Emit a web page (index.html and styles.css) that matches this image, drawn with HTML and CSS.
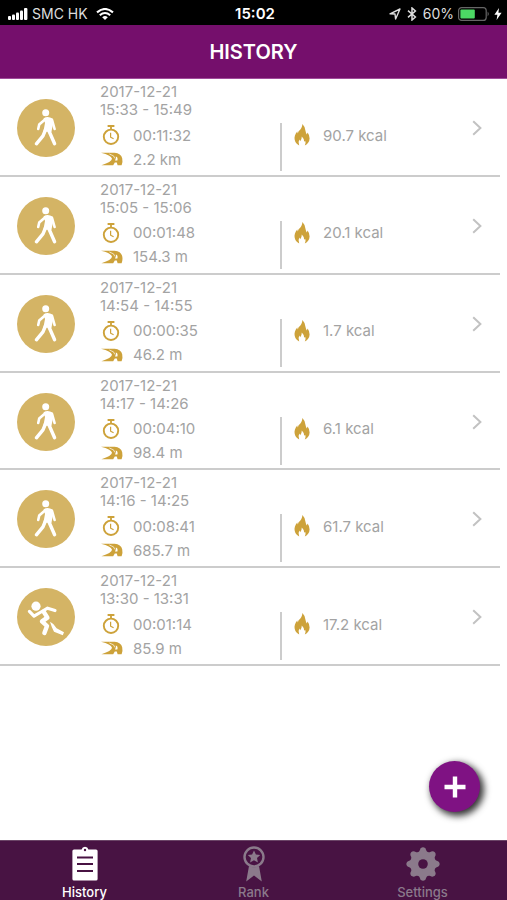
FILE: index.html
```html
<!DOCTYPE html>
<html lang="en">
<head>
<meta charset="utf-8">
<meta name="viewport" content="width=device-width, initial-scale=1">
<title>History</title>
<link rel="stylesheet" href="styles.css">
</head>
<body>
<svg class="sprite" aria-hidden="true">
  <symbol id="walk" viewBox="0 0 58 58">
    <circle cx="28.7" cy="13.7" r="3.5" fill="#fff"/>
    <path d="M26.6 19.2Q31 16.4 35.4 19.6L36 25 34.4 33 26.4 32.4 28 24Z" fill="#fff"/>
    <path d="M28 20.6L22.2 25.6 21.2 30M35 20.8L37.6 30" fill="none" stroke="#fff" stroke-width="2.6" stroke-linecap="round" stroke-linejoin="round"/>
    <path d="M28.4 31L26 36.8 19.4 44.8M32 32L37.6 44.8" fill="none" stroke="#fff" stroke-width="3.4" stroke-linecap="round" stroke-linejoin="round"/>
  </symbol>
  <symbol id="run" viewBox="0 0 58 58">
    <circle cx="19" cy="18.2" r="4.6" fill="#fff"/>
    <path d="M12.4 23.4L17 28.2 24 24 30.6 20.2 38 22.6" fill="none" stroke="#fff" stroke-width="3.2" stroke-linecap="round" stroke-linejoin="round"/>
    <path d="M26.6 23.6L30.4 29.6 25 33.4 30 38 27.4 45" fill="none" stroke="#fff" stroke-width="4.4" stroke-linecap="round" stroke-linejoin="round"/>
    <path d="M33 33.8Q37 35.6 39.6 40.2L47 44.2 45.8 47.2 37 43.8Q34.6 39.4 33 33.8Z" fill="#fff"/>
  </symbol>
  <symbol id="watch" viewBox="0 0 18 20">
    <circle cx="9" cy="11.8" r="7.2" fill="none" stroke="#cda23a" stroke-width="1.9"/>
    <path d="M5.6 1H12.4M9 1.6V4" fill="none" stroke="#cda23a" stroke-width="1.8"/>
    <path d="M8.6 7.8V12.2L11.6 13.8" fill="none" stroke="#cda23a" stroke-width="1.2"/>
  </symbol>
  <symbol id="road" viewBox="0 0 22 14">
    <path d="M0 .8H13.6Q20 1.4 21.2 6.2 22 9.8 20.6 13.2H16.6L15.8 10.4H13.8L12.2 13.2H.4Q10.8 10 11 6.8 10 3.2 0 .8Z" fill="#cda23a"/>
    <path d="M8.4 2Q14 3.6 13.8 6.4" fill="none" stroke="#fff" stroke-width=".7"/>
    <path d="M14.8 4.6Q17.2 5.4 16.4 8.4H14Q15.4 6.4 14.8 4.6Z" fill="#fff"/>
  </symbol>
  <symbol id="flame" viewBox="0 0 16 22">
    <path d="M8.4 0Q8.2 4.6 4.6 7.2L3.8 9.4 3.2 7.4Q0 11.4 .6 15.2 1.2 19.4 5.2 21.4 3.6 18.6 5.4 15.6L6.2 17.2Q7.8 15.4 7.8 12.4 10.6 15 10.2 17.8L11.2 16.8Q12.2 19.2 10.8 21.4 15.4 19 15.6 14.4 15.6 11 13.6 8.4L12.8 10.6Q11.8 8.6 11.4 6.4 11 2.6 8.4 0Z" fill="#cda23a"/>
  </symbol>
  <symbol id="chevron" viewBox="0 0 10 16">
    <path d="M1.2 1.2L8.4 8 1.2 14.8" fill="none" stroke="#c2c2c2" stroke-width="2"/>
  </symbol>
</svg>

<div class="screen">
  <div class="status">
    <div class="status-side">
      <svg width="20" height="12" viewBox="0 0 20 12" fill="#fff"><rect y="8" width="3" height="4" rx="1"/><rect x="4" y="6.5" width="3" height="5.5" rx="1"/><rect x="8" y="4.5" width="3" height="7.5" rx="1"/><rect x="12" y="2.5" width="3" height="9.5" rx="1"/><rect x="16" width="3.4" height="12" rx="1"/></svg>
      <span class="carrier">SMC HK</span>
      <svg width="18" height="12" viewBox="0 0 18 12" fill="none" stroke="#fff" stroke-width="2.1"><path d="M1 4.4Q9-2.4 17 4.4M3.8 7.2Q9 2.8 14.2 7.2"/><path d="M6.2 9.2Q9 6.8 11.8 9.2L9 12Z" fill="#fff" stroke="none"/></svg>
    </div>
    <span class="clock">15:02</span>
    <div class="status-side status-right">
      <svg width="12" height="12" viewBox="0 0 12 12" fill="none" stroke="#ddd" stroke-width="1.4" stroke-linejoin="round"><path d="M1 5.8L11 1 6.6 11 6 6Z"/></svg>
      <svg class="bluetooth" width="10" height="14" viewBox="0 0 10 14" fill="none" stroke="#ddd" stroke-width="1.5"><path d="M1 3.6L8.4 10 5 13V1L8.4 4 1 10.4"/></svg>
      <span>60%</span>
      <svg width="32" height="14" viewBox="0 0 32 14"><rect x=".6" y=".6" width="27.6" height="12.8" rx="3" fill="none" stroke="#666" stroke-width="1.2"/><rect x="2.4" y="2.4" width="14.4" height="9.2" rx="1" fill="#4cd964"/><path d="M29.6 4.6Q32 7 29.6 9.4Z" fill="#666"/></svg>
      <svg width="8" height="12" viewBox="0 0 8 12" fill="#fff"><path d="M5 0L.4 6.8H3.4L2.6 12 7.6 4.8H4.4Z"/></svg>
    </div>
  </div>
  <header class="bar"><h1>HISTORY</h1></header>

  <main class="content">
    <ul class="history">
      <li><a class="entry" href="#">
        <svg class="badge"><use href="#walk"/></svg>
        <div class="info"><div class="when">2017-12-21<br>15:33 - 15:49</div>
          <div class="stats">
            <div><div class="stat"><svg class="watch"><use href="#watch"/></svg>00:11:32</div><div class="stat"><svg class="road"><use href="#road"/></svg>2.2 km</div></div>
            <div class="energy"><div class="stat"><svg class="flame"><use href="#flame"/></svg>90.7 kcal</div></div>
          </div></div>
        <svg class="chevron"><use href="#chevron"/></svg></a></li>
      <li><a class="entry" href="#">
        <svg class="badge"><use href="#walk"/></svg>
        <div class="info"><div class="when">2017-12-21<br>15:05 - 15:06</div>
          <div class="stats">
            <div><div class="stat"><svg class="watch"><use href="#watch"/></svg>00:01:48</div><div class="stat"><svg class="road"><use href="#road"/></svg>154.3 m</div></div>
            <div class="energy"><div class="stat"><svg class="flame"><use href="#flame"/></svg>20.1 kcal</div></div>
          </div></div>
        <svg class="chevron"><use href="#chevron"/></svg></a></li>
      <li><a class="entry" href="#">
        <svg class="badge"><use href="#walk"/></svg>
        <div class="info"><div class="when">2017-12-21<br>14:54 - 14:55</div>
          <div class="stats">
            <div><div class="stat"><svg class="watch"><use href="#watch"/></svg>00:00:35</div><div class="stat"><svg class="road"><use href="#road"/></svg>46.2 m</div></div>
            <div class="energy"><div class="stat"><svg class="flame"><use href="#flame"/></svg>1.7 kcal</div></div>
          </div></div>
        <svg class="chevron"><use href="#chevron"/></svg></a></li>
      <li><a class="entry" href="#">
        <svg class="badge"><use href="#walk"/></svg>
        <div class="info"><div class="when">2017-12-21<br>14:17 - 14:26</div>
          <div class="stats">
            <div><div class="stat"><svg class="watch"><use href="#watch"/></svg>00:04:10</div><div class="stat"><svg class="road"><use href="#road"/></svg>98.4 m</div></div>
            <div class="energy"><div class="stat"><svg class="flame"><use href="#flame"/></svg>6.1 kcal</div></div>
          </div></div>
        <svg class="chevron"><use href="#chevron"/></svg></a></li>
      <li><a class="entry" href="#">
        <svg class="badge"><use href="#walk"/></svg>
        <div class="info"><div class="when">2017-12-21<br>14:16 - 14:25</div>
          <div class="stats">
            <div><div class="stat"><svg class="watch"><use href="#watch"/></svg>00:08:41</div><div class="stat"><svg class="road"><use href="#road"/></svg>685.7 m</div></div>
            <div class="energy"><div class="stat"><svg class="flame"><use href="#flame"/></svg>61.7 kcal</div></div>
          </div></div>
        <svg class="chevron"><use href="#chevron"/></svg></a></li>
      <li><a class="entry" href="#">
        <svg class="badge"><use href="#run"/></svg>
        <div class="info"><div class="when">2017-12-21<br>13:30 - 13:31</div>
          <div class="stats">
            <div><div class="stat"><svg class="watch"><use href="#watch"/></svg>00:01:14</div><div class="stat"><svg class="road"><use href="#road"/></svg>85.9 m</div></div>
            <div class="energy"><div class="stat"><svg class="flame"><use href="#flame"/></svg>17.2 kcal</div></div>
          </div></div>
        <svg class="chevron"><use href="#chevron"/></svg></a></li>
    </ul>
    <button class="add" type="button" aria-label="Add">
      <svg width="22" height="22" viewBox="0 0 22 22"><path d="M11 .5V21.5M.5 11H21.5" stroke="#fff" stroke-width="4.4"/></svg>
    </button>
  </main>

  <nav class="tabs">
    <a class="tab active" href="#">
      <svg width="34" height="36" viewBox="0 0 34 36"><path d="M6 3.5H13.6A3.5 3.5 0 0 1 20.4 3.5H28Q29.6 3.5 29.6 5V33Q29.6 34.6 28 34.6H6Q4.4 34.6 4.4 33V5Q4.4 3.5 6 3.5Z" fill="currentColor"/><circle cx="17" cy="4" r="1.2" fill="#481343"/><path d="M9 11.4H25M9 18H25M9 25H25" stroke="#481343" stroke-width="2"/></svg>
      History</a>
    <a class="tab" href="#">
      <svg width="34" height="36" viewBox="0 0 34 36"><circle cx="17" cy="11" r="9.5" fill="none" stroke="currentColor" stroke-width="2.4"/><path d="M17 4.6L18.9 8.6 23.2 9.1 20 12.1 20.9 16.4 17 14.3 13.1 16.4 14 12.1 10.8 9.1 15.1 8.6Z" fill="currentColor"/><path d="M12 20Q17 22.6 22 20L24.8 35.4 17 29.4 9.2 35.4Z" fill="currentColor"/></svg>
      Rank</a>
    <a class="tab" href="#">
      <svg width="34" height="36" viewBox="0 0 34 36"><g fill="currentColor"><circle cx="17" cy="18" r="13"/><path id="pair" d="M12.6 7L14.5 2.6Q17 0 19.5 2.6L21.4 7V29L19.5 33.4Q17 36 14.5 33.4L12.6 29Z"/><use href="#pair" transform="rotate(45 17 18)"/><use href="#pair" transform="rotate(90 17 18)"/><use href="#pair" transform="rotate(135 17 18)"/></g><circle cx="17" cy="18" r="4.8" fill="#481343"/></svg>
      Settings</a>
  </nav>
</div>
</body>
</html>
```
FILE: styles.css
```css
* { box-sizing: border-box; }

body {
  margin: 0;
  background: #fff;
  font-family: Inter, "Liberation Sans", sans-serif;
}

a { color: inherit; text-decoration: none; }

.sprite { display: none; }

.screen {
  display: flex;
  flex-direction: column;
  min-height: 100vh;
}

.status {
  display: grid;
  grid-template-columns: 1fr auto 1fr;
  align-items: center;
  height: 25px;
  padding: 2px 5px 0 8px;
  background: #000;
  color: #ddd;
  font-size: 14px;
}

.status-side { display: flex; align-items: center; gap: 4px; }
.status-right { justify-content: flex-end; }
.carrier { margin-right: 4px; }
.bluetooth { margin: 0 2px; }
.clock { color: #fff; font-size: 15px; font-weight: 600; }

.bar {
  height: 54px;
  border-bottom: 1px solid #a04c9b;
  background: #750f6c;
  color: #fff;
  text-align: center;
}

h1 {
  margin: 0;
  font-size: 20px;
  font-weight: 600;
  line-height: 54px;
}

.content { position: relative; flex: 1; }

.history {
  display: grid;
  grid-auto-rows: 1fr;
  min-height: 587px;
  margin: 0 7px 0 0;
  padding: 0;
  list-style: none;
}

.history li { border-bottom: 2px solid #ccc; }

.entry {
  display: flex;
  align-items: flex-start;
  padding: 4px 18px 0 17px;
  color: #a3a3a3;
  font-size: 15px;
}

.badge {
  width: 58px;
  height: 58px;
  margin: 16px 25px 0 0;
  border-radius: 50%;
  background: #d4b465;
}

.info { flex: 1; }
.when { line-height: 18px; }

.stats {
  display: grid;
  grid-template-columns: 180px 1fr;
  margin-top: 4px;
}

.stat {
  display: flex;
  align-items: center;
  height: 24px;
}

.energy { padding-left: 12px; border-left: 2px solid #ccc; }

.watch { width: 18px; height: 20px; margin: 0 13px 0 2px; }
.road { width: 22px; height: 14px; margin: 0 10px 0 1px; }
.flame { width: 16px; height: 22px; margin-right: 13px; }
.chevron { width: 10px; height: 16px; margin-top: 37px; }

.add {
  position: absolute;
  right: 27px;
  bottom: 28px;
  display: flex;
  align-items: center;
  justify-content: center;
  width: 51px;
  height: 51px;
  padding: 0;
  border: 0;
  border-radius: 50%;
  background: #7f1283;
  box-shadow: 3px 3px 7px 1px rgba(0, 0, 0, 0.8);
}

.tabs {
  display: grid;
  grid-template-columns: repeat(3, 1fr);
  height: 60px;
  border-top: 1px solid #6b4567;
  background: #481343;
}

.tab {
  display: flex;
  flex-direction: column;
  align-items: center;
  gap: 2px;
  padding-top: 5px;
  color: #8b7a8b;
  font-size: 13px;
  font-weight: 500;
  line-height: 16px;
}

.tab.active { color: #fff; }
```
